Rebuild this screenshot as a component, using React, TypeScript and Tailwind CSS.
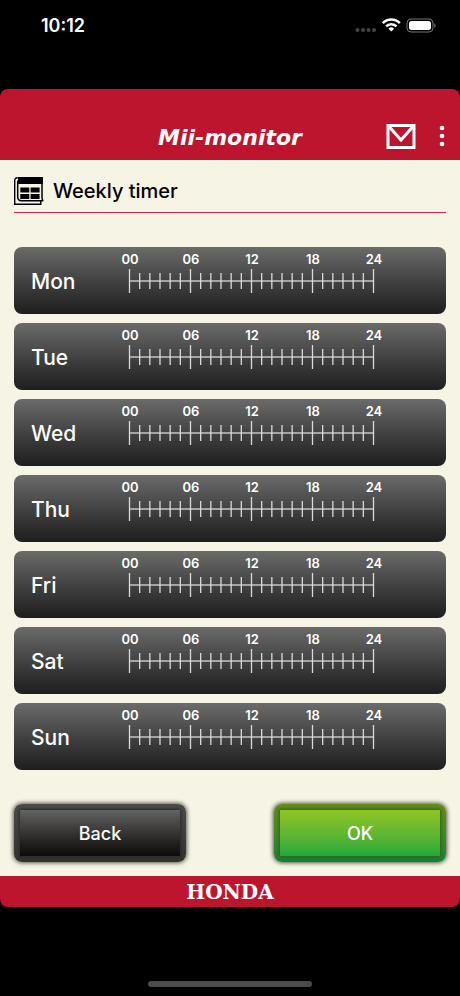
import React from "react";

const DAYS = ["Mon", "Tue", "Wed", "Thu", "Fri", "Sat", "Sun"];
const HOURS = ["00", "06", "12", "18", "24"];

function StatusBar() {
  return (
    <div className="flex h-[89px] items-start justify-between pt-4 pr-6 pl-[41px] text-white">
      <time className="text-lg leading-5 font-semibold">10:12</time>
      <div className="flex h-5 items-center">
        <svg width="82" height="20" viewBox="0 0 82 20" role="img" aria-label="Wi-Fi connected, battery full">
          <g fill="#454545">
            <circle cx="3.5" cy="14" r="2" />
            <circle cx="9" cy="14" r="2" />
            <circle cx="14.5" cy="14" r="2" />
            <circle cx="20" cy="14" r="2" />
          </g>
          <g fill="none" stroke="#fff" strokeWidth="2.6">
            <path d="M28.8 7.1a12 12 0 0 1 17 0" />
            <path d="M32.1 10.4a7.4 7.4 0 0 1 10.4 0" />
          </g>
          <path d="M34.5 12.7a4 4 0 0 1 5.6 0l-2.8 2.9z" fill="#fff" />
          <rect x="53" y="3" width="26" height="13" rx="4" fill="none" stroke="#777" />
          <rect x="55" y="5" width="22" height="9" rx="2.5" fill="#fff" />
          <path d="M80.3 7.3c1.8.8 1.8 3.6 0 4.4z" fill="#777" />
        </svg>
      </div>
    </div>
  );
}

function Header() {
  return (
    <header className="grid h-[71px] grid-cols-[1fr_auto_1fr] items-end rounded-t-lg bg-[#be152f] px-3 pb-2 text-white">
      <span />
      <span className="font-['DejaVu_Sans',sans-serif] text-[22px] leading-7 font-bold italic">Mii-monitor</span>
      <div className="flex items-center justify-end gap-5">
        <button type="button" aria-label="Messages">
          <svg className="block" width="30" height="32" viewBox="0 0 30 32" fill="none" stroke="#fff" strokeWidth="3">
            <path d="M2 5.5h26v22H2z" />
            <path d="M2.5 6 15 20 27.5 6" />
          </svg>
        </button>
        <button type="button" aria-label="More options">
          <svg className="block" width="12" height="32" viewBox="0 0 12 32" fill="#fff">
            <circle cx="6" cy="8" r="2.3" />
            <circle cx="6" cy="16" r="2.3" />
            <circle cx="6" cy="24" r="2.3" />
          </svg>
        </button>
      </div>
    </header>
  );
}

function CalendarIcon() {
  return (
    <svg width="30" height="28" viewBox="0 0 30 28" aria-hidden="true">
      <path d="M3.5.7C1.5.7.7 2 .7 4v23.3h26.1V24" fill="none" stroke="#000" strokeWidth="1.4" />
      <path d="M3.5.7H28v19.8c0 2 .4 3 1.3 3.3H7.5c-2.5 0-3.8-1-3.8-4V3.5" fill="none" stroke="#000" strokeWidth="1.5" />
      <path d="M4 0h24.7v7H4z" />
      <path d="M6.3 10.5h9v5h-9zM16.6 10.5h9v5h-9zM6.3 17h9v5h-9zM16.6 17h9v5h-9z" />
    </svg>
  );
}

function DayRow({ day }: { day: string }) {
  return (
    <li>
      <button
        type="button"
        className="flex h-[67px] w-full items-start rounded-lg bg-linear-to-b from-[#6b6b6b] to-[#1e1e1e] pl-[17px] text-left text-white"
      >
        <span className="w-[87px] self-center pt-0.5 text-[21px] leading-7 font-medium">{day}</span>
        <span className="flex w-[268px] flex-col pt-1">
          <span className="flex justify-between text-[13px] leading-4 font-semibold">
            {HOURS.map((hour) => (
              <span key={hour} className="w-6 text-center">
                {hour}
              </span>
            ))}
          </span>
          <svg
            className="mt-0.5 block"
            width="268"
            height="24"
            viewBox="0 0 268 24"
            stroke="#dadada"
            strokeWidth="1.3"
            aria-hidden="true"
          >
            <path d="M11.5 12h244" strokeWidth="1.6" stroke="#c4c4c4" />
            {Array.from({ length: 25 }, (_, i) => {
              const x = 11.5 + (i * 244) / 24;
              const inset = i % 6 === 0 ? 0 : 4;
              return <path key={i} d={`M${x} ${inset}V${24 - inset}`} />;
            })}
          </svg>
        </span>
      </button>
    </li>
  );
}

export default function App() {
  return (
    <div className="min-h-screen bg-black font-[Inter,'Liberation_Sans',sans-serif]">
      <StatusBar />
      <Header />
      <main className="bg-[#f6f5e5] px-[14px] pb-[14px]">
        <h1 className="flex h-[53px] items-center gap-[9px] border-b border-[#c52b40] pt-[9px] text-xl font-medium text-black">
          <CalendarIcon />
          Weekly timer
        </h1>
        <ul className="flex flex-col gap-[9px] pt-[34px]">
          {DAYS.map((day) => (
            <DayRow key={day} day={day} />
          ))}
        </ul>
        <div className="flex justify-between gap-[88px] pt-[34px]">
          <button
            type="button"
            className="h-[58px] flex-1 rounded-lg bg-linear-to-b from-[#4d4d4d] to-[#34322e] p-[6px] text-lg font-medium text-white shadow-[0_0_4px_1px_#55554d]"
          >
            <span className="flex h-full items-center justify-center bg-linear-to-b from-[#646464] to-[#0d0b09] pt-0.5 shadow-[0_0_3px_1px_#292929]">
              Back
            </span>
          </button>
          <button
            type="button"
            className="h-[58px] flex-1 rounded-lg bg-linear-to-b from-[#67891a] to-[#118132] p-[6px] text-lg font-medium text-white shadow-[0_0_4px_1px_#4d5546]"
          >
            <span className="flex h-full items-center justify-center bg-linear-to-b from-[#8fc522] to-[#1ba93b] pt-0.5 shadow-[0_0_3px_1px_#24651c]">
              OK
            </span>
          </button>
        </div>
      </main>
      <footer className="flex h-[31px] items-center justify-center rounded-b-lg bg-[#be152f] font-['DejaVu_Serif',serif] text-xl leading-6 font-bold text-white">
        HONDA
      </footer>
      <div className="flex h-[89px] items-end justify-center pb-[9px]">
        <div className="h-[6px] w-[164px] rounded-full bg-[#4b4b4b]" />
      </div>
    </div>
  );
}
